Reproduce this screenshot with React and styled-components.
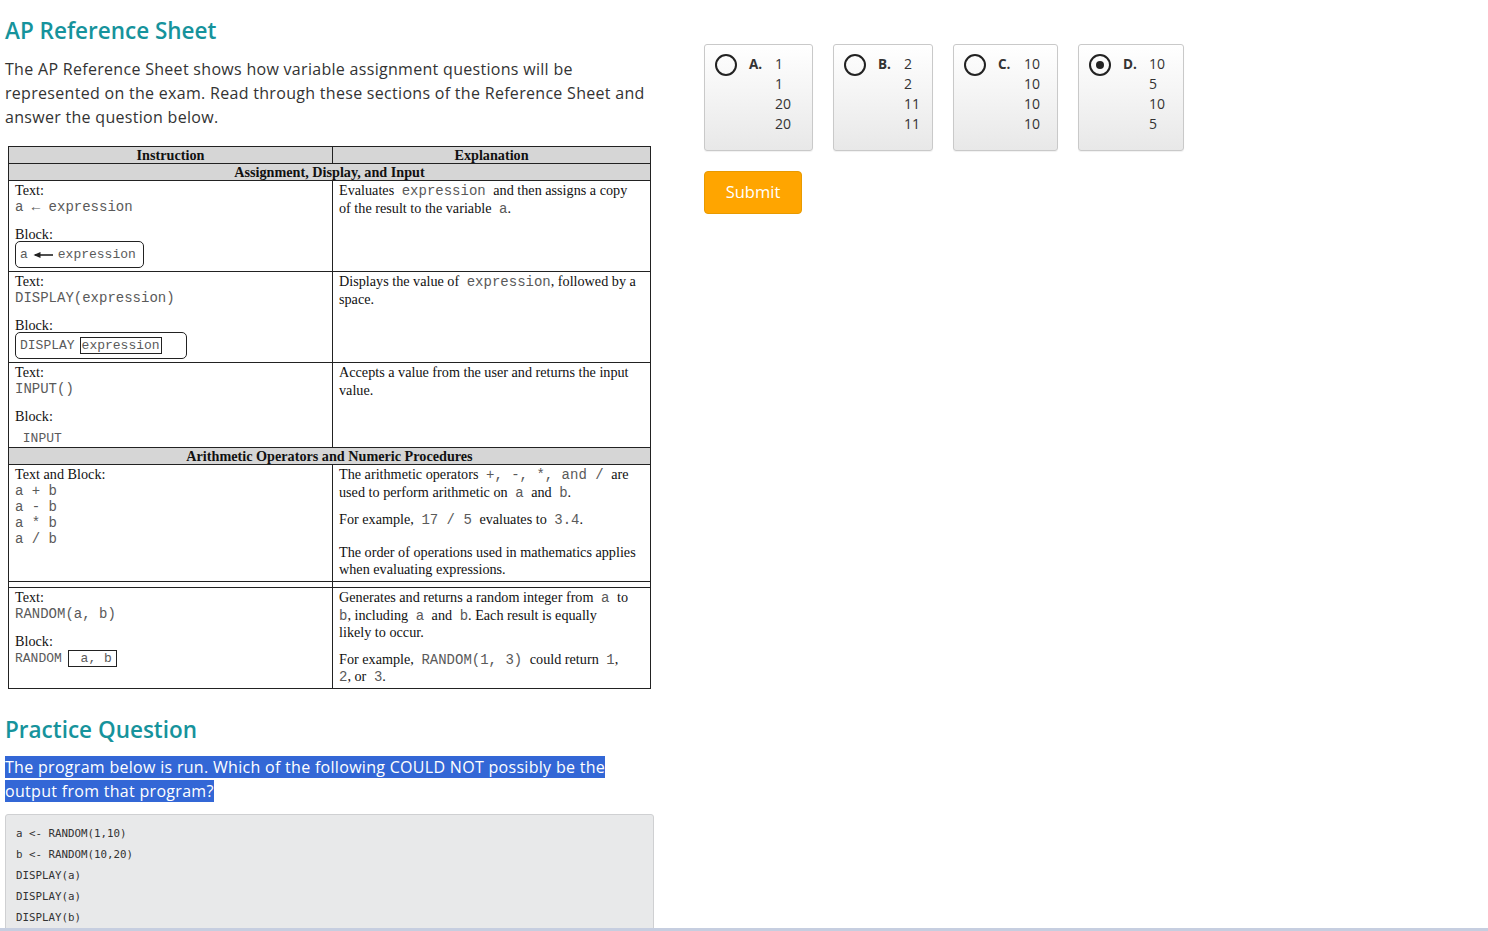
import React from 'react';
import styled, { createGlobalStyle } from 'styled-components';

const GlobalStyle = createGlobalStyle`
  html, body {
    margin: 0;
    padding: 0;
    background: #fff;
  }
  body {
    font-family: "Open Sans", "Liberation Sans", sans-serif;
    color: #333;
  }
`

const Page = styled.div`
  display: flex;
  gap: 50px;
  padding: 0 5px;
  height: 928px;
  overflow: hidden;
  border-bottom: 3px solid #c6cee0;
`

const LeftCol = styled.div`
  width: 649px;
  flex-shrink: 0;
`

const RightCol = styled.div`
  padding-top: 44px;
`

const Heading = styled.h2`
  margin: ${p => p.$top || 0}px 0 0;
  font-size: 22.5px;
  font-weight: 600;
  color: #16939c;
  line-height: 30px;
`

const Intro = styled.p`
  margin: 11px 0 0;
  font-size: 16px;
  letter-spacing: 0.3px;
  line-height: 24px;
  color: #333;
`

const Sheet = styled.table`
  margin: 17px 0 0 3px;
  width: 643px;
  border-collapse: collapse;
  font-family: "Liberation Serif", serif;
  font-size: 14.2px;
  line-height: 16px;
  color: #111;
  border: 1px solid #222;

  td, th {
    border: 1px solid #222;
    vertical-align: top;
    padding: 1px 10px 2px 6px;
  }
  td:first-child {
    width: 307px;
  }
`

const HeadCell = styled.th`
  background: #d6d6d6;
  font-weight: bold;
  text-align: center;
  &&& { padding: 0 6px; line-height: 16px; }
`

const Row = styled.tr`
  height: ${p => p.$h}px;
`

const Mono = styled.span`
  font-family: "Liberation Mono", monospace;
  color: #5a5a5a;
  font-size: ${p => p.$size || 14}px;
  line-height: 1;
  white-space: pre;
  margin-left: ${p => p.$l ? 4 : 0}px;
  margin-right: ${p => p.$r ? 4 : 0}px;
`

const Line = styled.div`
  margin-top: ${p => p.$gap || 0}px;
`

const Para = styled.div`
  line-height: 17.5px;
  margin-top: ${p => p.$gap || 0}px;
  padding-right: ${p => p.$pr || 0}px;
`

const BlockBox = styled.div`
  display: flex;
  align-items: center;
  gap: 5px;
  margin-top: -1px;
  padding: 0 4px;
  border: 1.5px solid #222;
  border-radius: 5px;
  width: ${p => p.$w}px;
  box-sizing: border-box;
  height: 27px;
`

const Inner = styled.span`
  border: 1.5px solid #222;
  padding: 0 ${p => p.$px || 1}px;
  font-family: "Liberation Mono", monospace;
  color: #5a5a5a;
  font-size: 13px;
  line-height: 15px;
  white-space: pre;
`

const RandomBlock = styled.div`
  display: flex;
  align-items: center;
  gap: 6px;
  margin-top: 1px;
`

const Arrow = styled.svg`
  width: 20px;
  height: 8px;
`

const Spacer = styled.tr`
  height: 6px;
  td { padding: 0; }
`

const Question = styled.p`
  margin: 10px 0 0;
  font-size: 16px;
  letter-spacing: 0.3px;
  line-height: 24px;

  span {
    background: #3367d6;
    color: #fff;
  }
`

const CodeBox = styled.pre`
  margin: 11px 0 0;
  padding: 8px 10px;
  background: #e8e9ea;
  border: 1px solid #cfd0d2;
  border-radius: 3px;
  font-family: "DejaVu Sans Mono", monospace;
  font-size: 10.8px;
  line-height: 21px;
  color: #333;
`

const Options = styled.div`
  display: flex;
  gap: 20px;
`

const Card = styled.label`
  display: flex;
  align-items: flex-start;
  width: ${p => p.$w}px;
  height: 107px;
  box-sizing: border-box;
  padding: 9px 10px 0 10px;
  border: 1px solid #c9c9c9;
  border-radius: 3px;
  background: linear-gradient(#fff, #e8e8e8);
  box-shadow: 0 1px 1px rgba(0,0,0,0.06);
  font-size: 14px;
  line-height: 20px;
  color: #333;
`

const Radio = styled.span`
  width: 22px;
  height: 22px;
  box-sizing: border-box;
  border: 2px solid #222;
  border-radius: 50%;
  display: flex;
  align-items: center;
  justify-content: center;
  flex-shrink: 0;

  &::after {
    content: '';
    width: 8px;
    height: 8px;
    border-radius: 50%;
    background: #222;
    display: ${p => p.$on ? 'block' : 'none'};
  }
`

const Letter = styled.span`
  font-weight: 700;
  margin-left: 12px;
  width: 26px;
  font-size: 13.5px;
`

const Values = styled.div`
  display: flex;
  flex-direction: column;
`

const SubmitButton = styled.button`
  margin-top: 20px;
  width: 98px;
  height: 43px;
  background: #ffa500;
  color: #fff;
  border: 1px solid #e89a00;
  border-radius: 4px;
  font-family: "Open Sans", "Liberation Sans", sans-serif;
  font-size: 16.5px;
  font-weight: 500;
  padding: 0 0 3px;
`

const options = [
  { letter: 'A.', values: ['1', '1', '20', '20'], w: 109 },
  { letter: 'B.', values: ['2', '2', '11', '11'], w: 100 },
  { letter: 'C.', values: ['10', '10', '10', '10'], w: 105 },
  { letter: 'D.', values: ['10', '5', '10', '5'], w: 106, on: true },
]

const App = () => {
  return (
    <>
      <GlobalStyle />
      <Page>
        <LeftCol>
          <Heading $top={16}>AP Reference Sheet</Heading>
          <Intro>
            The AP Reference Sheet shows how variable assignment questions will be
            represented on the exam. Read through these sections of the Reference Sheet and
            answer the question below.
          </Intro>

          <Sheet>
            <tbody>
              <tr>
                <HeadCell>Instruction</HeadCell>
                <HeadCell>Explanation</HeadCell>
              </tr>
              <tr>
                <HeadCell colSpan={2}>Assignment, Display, and Input</HeadCell>
              </tr>
              <Row $h={91}>
                <td>
                  <Line>Text:</Line>
                  <Line><Mono>a ← expression</Mono></Line>
                  <Line $gap={12}>Block:</Line>
                  <BlockBox $w={129}>
                    <Mono $size={13}>a</Mono>
                    <Arrow viewBox="0 0 20 8">
                      <path d="M2 4 H20" stroke="#222" strokeWidth="1.6" />
                      <path d="M0.5 4 L7.5 1 L7.5 7 Z" fill="#222" />
                    </Arrow>
                    <Mono $size={13}>expression</Mono>
                  </BlockBox>
                </td>
                <td>
                  <Para>
                    Evaluates <Mono $l $r>expression</Mono> and then assigns a copy of the result to the variable <Mono $l>a</Mono>.
                  </Para>
                </td>
              </Row>
              <Row $h={91}>
                <td>
                  <Line>Text:</Line>
                  <Line><Mono>DISPLAY(expression)</Mono></Line>
                  <Line $gap={12}>Block:</Line>
                  <BlockBox $w={172}>
                    <Mono $size={13}>DISPLAY</Mono>
                    <Inner>expression</Inner>
                  </BlockBox>
                </td>
                <td>
                  <Para>
                    Displays the value of <Mono $l>expression</Mono>, followed by a space.
                  </Para>
                </td>
              </Row>
              <Row $h={85}>
                <td>
                  <Line>Text:</Line>
                  <Line><Mono>INPUT()</Mono></Line>
                  <Line $gap={12}>Block:</Line>
                  <Line $gap={5}><Mono $size={13}> INPUT</Mono></Line>
                </td>
                <td>
                  <Para>Accepts a value from the user and returns the input value.</Para>
                </td>
              </Row>
              <tr>
                <HeadCell colSpan={2}>Arithmetic Operators and Numeric Procedures</HeadCell>
              </tr>
              <Row $h={117}>
                <td>
                  <Line>Text and Block:</Line>
                  <Line><Mono>a + b</Mono></Line>
                  <Line><Mono>a - b</Mono></Line>
                  <Line><Mono>a * b</Mono></Line>
                  <Line><Mono>a / b</Mono></Line>
                </td>
                <td>
                  <Para>The arithmetic operators <Mono $l $r>+, -, *, and /</Mono> are used to perform arithmetic on <Mono $l $r>a</Mono> and <Mono $l>b</Mono>.</Para>
                  <Para $gap={10}>For example, <Mono $l $r>17 / 5</Mono> evaluates to <Mono $l>3.4</Mono>.</Para>
                  <Para $gap={15}>The order of operations used in mathematics applies when evaluating expressions.</Para>
                </td>
              </Row>
              <Spacer>
                <td></td>
                <td></td>
              </Spacer>
              <Row $h={101}>
                <td>
                  <Line>Text:</Line>
                  <Line><Mono>RANDOM(a, b)</Mono></Line>
                  <Line $gap={12}>Block:</Line>
                  <RandomBlock>
                    <Mono $size={13}>RANDOM</Mono>
                    <Inner $px={4}> a, b</Inner>
                  </RandomBlock>
                </td>
                <td>
                  <Para $pr={9}>Generates and returns a random integer from <Mono $l $r>a</Mono> to <Mono>b</Mono>, including <Mono $l $r>a</Mono> and <Mono $l>b</Mono>. Each result is equally likely to occur.</Para>
                  <Para $gap={9} $pr={9}>For example, <Mono $l $r>RANDOM(1, 3)</Mono> could return <Mono $l>1</Mono>, <Mono>2</Mono>, or <Mono $l>3</Mono>.</Para>
                </td>
              </Row>
            </tbody>
          </Sheet>

          <Heading $top={26}>Practice Question</Heading>
          <Question>
            <span>
              The program below is run. Which of the following COULD NOT possibly be the
              output from that program?
            </span>
          </Question>
          <CodeBox>{`a <- RANDOM(1,10)
b <- RANDOM(10,20)
DISPLAY(a)
DISPLAY(a)
DISPLAY(b)
DISPLAY(b)`}</CodeBox>
        </LeftCol>

        <RightCol>
          <Options>
            {options.map((opt, index) => (
              <Card key={`opt${index}`} $w={opt.w}>
                <Radio $on={opt.on} />
                <Letter>{opt.letter}</Letter>
                <Values>
                  {opt.values.map((v, i) => (
                    <span key={`v${i}`}>{v}</span>
                  ))}
                </Values>
              </Card>
            ))}
          </Options>
          <SubmitButton>Submit</SubmitButton>
        </RightCol>
      </Page>
    </>
  )
};

export default App;
